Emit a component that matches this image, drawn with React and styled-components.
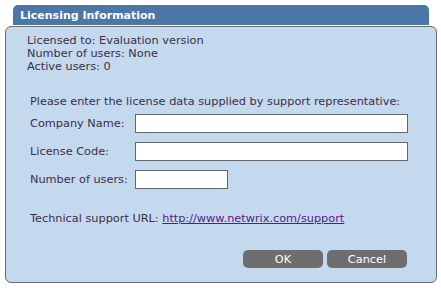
import React from "react";
import styled, { createGlobalStyle } from "styled-components";

const GlobalStyle = createGlobalStyle`
  body {
    margin: 0;
    background: #fff;
    font-family: "DejaVu Sans", Verdana, sans-serif;
  }
`;

const Dialog = styled.div`
  width: 432px;
  margin: 5px 0 0 5px;
  display: flex;
  flex-direction: column;
`;

const Tab = styled.div`
  margin-left: 8px;
  width: 416px;
  height: 20px;
  box-sizing: border-box;
  padding: 0 7px;
  background: #4a76a8;
  border-radius: 5px 5px 0 0;
  color: #fff;
  font-weight: bold;
  font-size: 11px;
  line-height: 21px;
  margin-bottom: 1px;
`;

const Panel = styled.div`
  height: 257px;
  box-sizing: border-box;
  border: 1px solid #6b6b6b;
  border-radius: 6px;
  background: #c4d9ee;
  padding: 7px 29px 0 21px;
  color: #3b2f45;
  font-size: 11.3px;
  display: flex;
  flex-direction: column;
`;

const InfoLine = styled.div`
  line-height: 13px;
  margin-top: ${(p) => p.$top || 0}px;
`;

const Section = styled.div`
  margin-top: 22px;
  padding-left: 3px;
  display: flex;
  flex-direction: column;
`;

const Row = styled.label`
  display: grid;
  grid-template-columns: 105px auto;
  align-items: center;
  height: 19px;
  margin-top: ${(p) => p.$top || 0}px;
`;

const Field = styled.input`
  box-sizing: border-box;
  width: ${(p) => p.$w}px;
  height: 19px;
  border: 1px solid #666;
  background: #fff;
  margin: 0;
  padding: 0 3px;
  outline: none;
`;

const Link = styled.a`
  color: #551a8b;
  text-decoration: underline;
`;

const Buttons = styled.div`
  display: flex;
  justify-content: flex-end;
  gap: 4px;
  margin-top: 25px;
`;

const Button = styled.button`
  width: 80px;
  height: 18px;
  border: none;
  border-radius: 5px;
  background: #6e6e6e;
  color: #fff;
  font-family: "DejaVu Sans", Verdana, sans-serif;
  font-size: 11.3px;
  padding: 0;
`;

export default function App() {
  return (
    <>
      <GlobalStyle />
      <Dialog>
        <Tab>Licensing Information</Tab>
        <Panel>
          <InfoLine>Licensed to: Evaluation version</InfoLine>
          <InfoLine>Number of users: None</InfoLine>
          <InfoLine>Active users: 0</InfoLine>
          <Section>
            <InfoLine>Please enter the license data supplied by support representative:</InfoLine>
            <Row $top={6}>
              <span>Company Name:</span>
              <Field $w={273} />
            </Row>
            <Row $top={9}>
              <span>License Code:</span>
              <Field $w={273} />
            </Row>
            <Row $top={9}>
              <span>Number of users:</span>
              <Field $w={93} />
            </Row>
            <InfoLine $top={23}>
              Technical support URL: <Link href="#">http://www.netwrix.com/support</Link>
            </InfoLine>
          </Section>
          <Buttons>
            <Button>OK</Button>
            <Button>Cancel</Button>
          </Buttons>
        </Panel>
      </Dialog>
    </>
  );
}
